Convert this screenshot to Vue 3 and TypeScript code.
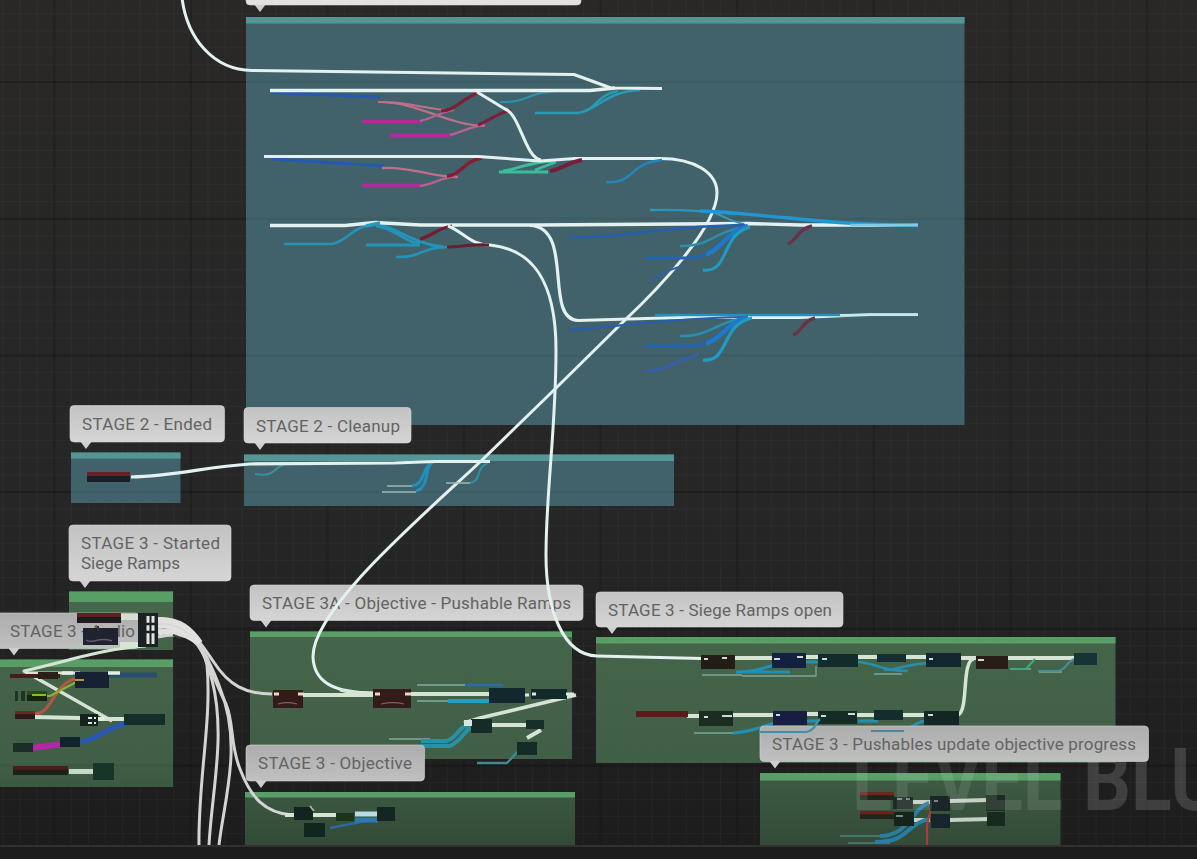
<script setup lang="ts">
interface Panel { x: number; y: number; w: number; h: number; head: number; tone: 'teal' | 'green' }
interface Label { x: number; y: number; w: number; h: number; lines: { t: string; len: number }[]; tail: number; shade: string }
interface Wire { d: string; c: string; w: number }
interface Block { x: number; y: number; w: number; h: number; c: string; top?: string }

const panels: Panel[] = [
  { x: 246, y: 17, w: 718.5, h: 408, head: 6.5, tone: 'teal' },
  { x: 71, y: 452.5, w: 109.5, h: 50.5, head: 6, tone: 'teal' },
  { x: 244, y: 454.5, w: 430, h: 51.5, head: 6.5, tone: 'teal' },
  { x: 69, y: 591.5, w: 104, h: 58.5, head: 10.5, tone: 'green' },
  { x: 0, y: 659.5, w: 173, h: 127.5, head: 7.5, tone: 'green' },
  { x: 250, y: 631.5, w: 322, h: 127.5, head: 5.5, tone: 'green' },
  { x: 245, y: 792, w: 330, h: 54, head: 5.5, tone: 'green' },
  { x: 596, y: 637, w: 519.5, h: 126, head: 6.5, tone: 'green' },
  { x: 760, y: 773, w: 300.5, h: 73, head: 7.5, tone: 'green' },
]

const backLabels: Label[] = [
  { x: 246, y: -40, w: 335, h: 45, lines: [], tail: 260, shade: 'top' },
  { x: 70, y: 405.5, w: 154.5, h: 36.5, lines: [{ t: 'STAGE 2 - Ended', len: 130 }], tail: 86, shade: 'light' },
  { x: 244, y: 407.5, w: 167, h: 35.5, lines: [{ t: 'STAGE 2 - Cleanup', len: 144 }], tail: 260, shade: 'light' },
  { x: 69, y: 525, w: 162, h: 56, lines: [{ t: 'STAGE 3 - Started', len: 139 }, { t: 'Siege Ramps', len: 99 }], tail: 85, shade: 'light' },
  { x: -6, y: 613, w: 145, h: 35.5, lines: [{ t: 'STAGE 3 - Audio', len: 125 }], tail: 14, shade: 'dim' },
  { x: 250, y: 585, w: 333, h: 35.5, lines: [{ t: 'STAGE 3A - Objective - Pushable Ramps', len: 309 }], tail: 266, shade: 'light' },
  { x: 596, y: 592, w: 247, h: 35, lines: [{ t: 'STAGE 3 - Siege Ramps open', len: 224 }], tail: 612, shade: 'light' },
]

const frontLabels: Label[] = [
  { x: 246, y: 745, w: 178.5, h: 36, lines: [{ t: 'STAGE 3 - Objective', len: 154 }], tail: 261, shade: 'dim' },
  { x: 760, y: 726, w: 388.5, h: 35.5, lines: [{ t: 'STAGE 3 - Pushables update objective progress', len: 364 }], tail: 775, shade: 'dim' },
]

const W = '#e4f1f1'
const G = '#d6e4d5'
const S = '#d4d4d3'
const wires: Wire[] = [
  // stage 2, data pins
  { d: 'M272 92.5 L380 97', c: '#2459ae', w: 3 },
  { d: 'M378 102 C420 102 445 125 485 126', c: '#bd7088', w: 2.2 },
  { d: 'M378 102 C410 101 430 111 454 110', c: '#bd7088', w: 2 },
  { d: 'M362 121.5 H422', c: '#b32b98', w: 3.5 },
  { d: 'M420 121 C434 118 440 112 454 110', c: '#b86090', w: 2.2 },
  { d: 'M390 135.5 H450', c: '#b32b98', w: 4 },
  { d: 'M450 135 C462 132 468 127 485 125', c: '#b86090', w: 2.4 },
  { d: 'M441 111 C455 111 464 97 480 92', c: '#7d1f36', w: 3.2 },
  { d: 'M478 125 C490 120 500 112 511 110', c: '#7d1f36', w: 3 },
  { d: 'M500 102 C530 103 525 92 560 91', c: '#2e93a9', w: 2 },
  { d: 'M535 113 H578 C600 109 604 92 640 90', c: '#279ab5', w: 2.6 },
  { d: 'M582 112 C595 110 598 94 618 91', c: '#279ab5', w: 2.3 },
  { d: 'M272 159 L384 166', c: '#2459ae', w: 3 },
  { d: 'M382 168 C410 166 435 178 458 177', c: '#bd7088', w: 2.3 },
  { d: 'M362 185.5 H420', c: '#b32b98', w: 4 },
  { d: 'M420 186 C434 184 440 178 456 176', c: '#b86090', w: 2.4 },
  { d: 'M447 176 C460 176 465 160 482 158', c: '#841c34', w: 3.4 },
  { d: 'M499 172 H548 M503 171 C520 169 525 162 556 161 M535 170 L556 162', c: '#3abd9b', w: 2.8 },
  // stage 2, execution
  { d: 'M182 -2 C187 38 213 70 252 70.5 L574 74.5 L611 88 L662 88.5', c: W, w: 3 },
  { d: 'M270 90.5 H590 L615 88', c: W, w: 3.3 },
  { d: 'M477 92 L505 109 C520 114 525 158 541 160', c: W, w: 3 },
  { d: 'M264 156.5 H478 L540 161 L575 158.5 H658 C695 158 717 173 717 193 C717 228 655 292 625 320 L553 391 L480 462 C420 518 312 610 313 657 C314 682 333 693 375 693', c: W, w: 3 },
  { d: 'M550 171 C560 170 566 163 582 160', c: '#741e3a', w: 4 },
  { d: 'M606 182 C635 184 628 163 662 160', c: '#2386bd', w: 2.4 },
  { d: 'M284 244 H332 C350 240 350 227 376 224', c: '#2593b8', w: 2.6 },
  { d: 'M370 224 C390 222 410 244 444 247 M376 226 C395 228 404 242 420 244 M366 245 H420', c: '#2593b8', w: 2.8 },
  { d: 'M396 257 C422 258 420 247 449 247', c: '#2593b8', w: 2.6 },
  { d: 'M270 225.5 H345 L375 222.5 L420 225 H540 L748 223.5 L800 225 H918', c: W, w: 3.4 },
  { d: 'M366 226 L380 223', c: '#239cb9', w: 3.5 },
  { d: 'M420 239 C430 237 438 228 452 226', c: '#731c32', w: 3.2 },
  { d: 'M448 226 C464 232 470 245 490 245 C532 249 556 280 556 350 C556 430 546 490 546 555 C546 610 563 655 597 656 L702 658.5', c: W, w: 3 },
  { d: 'M447 247 C460 247 470 244 489 245', c: '#65202d', w: 3 },
  { d: 'M530 225.5 C575 227 543 319 578 320.5 L680 317.5 H800 L870 314.5 H918', c: W, w: 3.2 },
  { d: 'M650 210 C690 209 715 212 735 214', c: '#2b95bf', w: 2.4 },
  { d: 'M700 211 C735 212 760 216 790 218 C830 222 860 225 918 225', c: '#2097d2', w: 3.4 },
  { d: 'M850 225 H918', c: '#7fcbe6', w: 2.4 },
  { d: 'M715 213 C725 217 732 222 744 224', c: '#3c9ab1', w: 2 },
  { d: 'M570 237 C620 239 660 226 745 225', c: '#285eae', w: 2.6 },
  { d: 'M680 246 C710 247 714 231 745 227', c: '#298fac', w: 2.4 },
  { d: 'M645 258 H692 C718 256 724 233 746 226', c: '#2464b2', w: 3 },
  { d: 'M706 255 C722 248 726 233 748 226', c: '#1e78cc', w: 4.5 },
  { d: 'M703 270 C730 273 720 235 750 227', c: '#219bc2', w: 3 },
  { d: 'M650 281 C665 273 671 268 684 266', c: '#345fa7', w: 2 },
  { d: 'M788 244 C798 239 798 229 812 226', c: '#6a3246', w: 3.4 },
  { d: 'M655 315 H840 L918 315', c: '#2490bb', w: 2.4 },
  { d: 'M570 330 C625 326 670 318 745 317', c: '#285eae', w: 2.2 },
  { d: 'M680 336 C710 337 715 322 745 318', c: '#298fac', w: 2.6 },
  { d: 'M645 346 H692 C718 344 724 324 748 317', c: '#2464b2', w: 3 },
  { d: 'M706 344 C722 338 726 324 748 317', c: '#1e78cc', w: 4.5 },
  { d: 'M703 360 C730 362 720 325 752 318', c: '#219bc2', w: 3.2 },
  { d: 'M645 371 C665 371 675 361 700 354', c: '#375fae', w: 2.6 },
  { d: 'M793 335 C803 331 802 321 815 318', c: '#6a3246', w: 3.4 },
  { d: 'M840 315 H918', c: '#c4e6ec', w: 2 },
  // stage 2 cleanup
  { d: 'M255 474 C278 478 272 465 290 463', c: '#37919b', w: 2 },
  { d: 'M387 486 H412 M382 492 H416 M446 483 H470', c: '#9bb9b7', w: 1.3 },
  { d: 'M412 486 C425 485 422 466 433 462 M416 491 C429 488 425 468 431 464', c: '#238fb9', w: 3 },
  { d: 'M470 483 C482 481 475 468 488 463', c: '#328da1', w: 2.2 },
  { d: 'M131 477 C175 476 205 467 250 464 L395 463 L435 461.5 H490', c: W, w: 3.2 },
  // stage 3 fan out
  { d: 'M158 619 C185 617 200 642 213 661 C229 686 246 694 272 694', c: S, w: 3 },
  { d: 'M158 622 C190 622 203 645 207 665 C212 720 198 780 199 845', c: S, w: 3 },
  { d: 'M158 626 C195 628 203 646 212 680 C226 735 212 790 209 845', c: S, w: 3 },
  { d: 'M158 630 C195 630 206 650 220 688 C243 745 224 800 219 845', c: S, w: 3 },
  { d: 'M158 624 C200 624 206 664 226 704 C234 722 230 745 240 769 C251 798 265 813 292 815', c: S, w: 3 },
  { d: 'M158 637 C190 630 201 643 208 660', c: S, w: 3 },
  { d: 'M158 620 C180 619 191 630 200 643', c: '#e0e0df', w: 6 },
  { d: 'M158 633 C176 629 184 634 197 642', c: '#e0e0df', w: 5 },
  { d: 'M158 627 C168 625 176 629 184 633', c: '#e0e0df', w: 4 },
  { d: 'M173 635 L181 638', c: '#3c3f3d', w: 2 },
  // audio
  { d: 'M120 617 H139 M120 645 L140 645', c: G, w: 6 },
  { d: 'M146 646 C105 648 65 662 24 671 L105 717 L112 721', c: G, w: 3.2 },
  { d: 'M28 673 H80', c: G, w: 3 },
  { d: 'M34 714 C54 714 51 683 80 677', c: '#b05742', w: 3.2 },
  { d: 'M30 696 H50 L82 679', c: '#86b536', w: 2 },
  { d: 'M34 717 L80 718 M96 719 H125', c: G, w: 4 },
  { d: 'M80 742 C100 739 107 726 132 722', c: '#2958b2', w: 5 },
  { d: 'M32 748 L62 744', c: '#b128a6', w: 6 },
  { d: 'M69 771.5 H95', c: '#c8d9ca', w: 5 },
  { d: 'M108 675 H157', c: '#294d6c', w: 5 },
  // pushable ramps
  { d: 'M303 695 H374 M411 694 H490', c: G, w: 4.2 },
  { d: 'M340 690 C350 693 360 693.5 374 693.5', c: G, w: 3 },
  { d: 'M417 685 H466 M417 701 H450 M389 739 H430 M390 746 H424', c: '#82ada0', w: 1.3 },
  { d: 'M465 685 H503', c: '#286baf', w: 2.6 },
  { d: 'M448 701 H490', c: '#249fc2', w: 4 },
  { d: 'M421 741 H446 C458 738 456 728 470 724 M421 746 H450 C460 742 464 732 471 727', c: '#2791a7', w: 4 },
  { d: 'M576 695 L480 718 L464 723', c: G, w: 3.6 },
  { d: 'M492 725 H527 M527 738 L541 730', c: G, w: 4 },
  { d: 'M477 763 H507 L520 749', c: '#3f8997', w: 2.4 },
  // objective
  { d: 'M285 815 H300 M312 815 H337', c: G, w: 4 },
  { d: 'M330 828 L376 819', c: '#286aa1', w: 2.4 },
  { d: 'M355 814 H378', c: '#b9dbe3', w: 5 },
  { d: 'M355 820 H378', c: '#2b79b0', w: 5 },
  // siege ramps
  { d: 'M735 658 H772 M805 657 H819 M857 657 H877 M903 657 H930 M960 658 H978 M1008 658 H1074', c: G, w: 4 },
  { d: 'M687 716 H700 M733 715 H774 M806 714 H820 M857 715 H877 M902 715 H928', c: G, w: 4 },
  { d: 'M958 715 C969 711 961 660 974 659', c: G, w: 3.5 },
  { d: 'M702 675 H742 M742 676 H816 V666 M874 674 H902 M694 733 H740 M1010 669 H1031 M1039 672 H1062', c: '#79a89b', w: 1.3 },
  { d: 'M736 672 C763 672 764 665 790 662 H819 M740 672 H790', c: '#258faf', w: 3 },
  { d: 'M855 662 C875 661 876 671 908 671 M884 670 C900 670 905 664 928 663', c: '#258faf', w: 2.6 },
  { d: 'M733 733 C763 731 764 722 790 721 H820', c: '#258faf', w: 3 },
  { d: 'M858 721 H878 M901 731 C910 731 914 721 930 720', c: '#258faf', w: 3 },
  { d: 'M1010 669 H1026 L1035 659', c: '#39a982', w: 2 },
  { d: 'M1038 671 H1058 C1067 670 1066 661 1075 659', c: '#478f99', w: 2 },
  // pushables update
  { d: 'M913 802 H930 M950 801 L988 800 M914 820 H930 M950 820 L990 819', c: '#c6d0c5', w: 4 },
  { d: 'M840 836 H884 M848 843 H890', c: '#507f79', w: 1.4 },
  { d: 'M875 842 C910 842 904 825 929 819 M880 836 C909 836 912 808 929 803', c: '#267ea4', w: 4 },
  { d: 'M927 846 V825 L932 804', c: '#a93e3b', w: 2.2 },
]

const blocks: Block[] = [
  { x: 87, y: 472, w: 43, h: 10, c: '#191e29', top: '#6b1e26' },
  { x: 77, y: 613, w: 44, h: 10, c: '#1b1c1f', top: '#5e211f' },
  { x: 83, y: 628, w: 35, h: 17, c: '#20222d' },
  { x: 138, y: 613, w: 20, h: 34, c: '#1d2023' },
  { x: 10, y: 674, w: 50, h: 4, c: '#4a1b19' },
  { x: 38, y: 672, w: 20, h: 7, c: '#2b1e18' },
  { x: 75, y: 672, w: 34, h: 16, c: '#162133' },
  { x: 15, y: 691, w: 3, h: 10, c: '#1f3320' }, { x: 21, y: 691, w: 4, h: 10, c: '#1f3320' },
  { x: 27, y: 691, w: 20, h: 10, c: '#17230f', top: '#2c4a14' },
  { x: 15, y: 711, w: 20, h: 8, c: '#281b18', top: '#742320' },
  { x: 80, y: 714, w: 18, h: 12, c: '#14231e' },
  { x: 124, y: 714, w: 41, h: 11, c: '#142f28' },
  { x: 13, y: 743, w: 20, h: 9, c: '#1a2d26' },
  { x: 60, y: 737, w: 20, h: 10, c: '#13232b' },
  { x: 13, y: 766, w: 55, h: 9, c: '#1d2118', top: '#472018' },
  { x: 93, y: 763, w: 21, h: 17, c: '#18352a' },
  { x: 273, y: 690, w: 30, h: 18, c: '#331b1a' },
  { x: 373, y: 689, w: 38, h: 19, c: '#331b1a' },
  { x: 489, y: 688, w: 36, h: 15, c: '#12282e' },
  { x: 531, y: 689, w: 36, h: 10, c: '#12282a' },
  { x: 471, y: 719, w: 21, h: 14, c: '#152b27' },
  { x: 526, y: 720, w: 18, h: 9, c: '#172f28' },
  { x: 517, y: 742, w: 20, h: 13, c: '#142b28' },
  { x: 294, y: 807, w: 19, h: 13, c: '#13241f' }, { x: 304, y: 823, w: 21, h: 14, c: '#11261f' },
  { x: 336, y: 813, w: 18, h: 8, c: '#1c351a' }, { x: 377, y: 807, w: 18, h: 14, c: '#13261f' },
  { x: 701, y: 655, w: 34, h: 14, c: '#241d17' }, { x: 772, y: 653, w: 34, h: 15, c: '#13203f' },
  { x: 818, y: 654, w: 40, h: 13, c: '#142b2c' }, { x: 877, y: 654, w: 29, h: 8, c: '#123032' },
  { x: 926, y: 653, w: 35, h: 14, c: '#132530' }, { x: 976, y: 656, w: 32, h: 13, c: '#291d18' },
  { x: 1074, y: 653, w: 23, h: 12, c: '#173337' },
  { x: 636, y: 711, w: 52, h: 6, c: '#541f1b' },
  { x: 699, y: 711, w: 34, h: 15, c: '#1b2c20' }, { x: 773, y: 711, w: 34, h: 14, c: '#171d43' },
  { x: 818, y: 711, w: 39, h: 13, c: '#142b27' }, { x: 874, y: 710, w: 29, h: 10, c: '#142c2c' },
  { x: 924, y: 711, w: 35, h: 14, c: '#142526' },
  { x: 860, y: 792, w: 34, h: 8, c: '#20261c', top: '#6f2520' },
  { x: 860, y: 811, w: 34, h: 8, c: '#20261c', top: '#771d1b' },
  { x: 893, y: 797, w: 20, h: 12, c: '#1c2924' }, { x: 894, y: 812, w: 20, h: 14, c: '#16231d' },
  { x: 930, y: 796, w: 20, h: 15, c: '#1a2527' }, { x: 931, y: 814, w: 19, h: 14, c: '#16242b' },
  { x: 986, y: 795, w: 19, h: 16, c: '#1b2b23' }, { x: 987, y: 812, w: 18, h: 14, c: '#172a20' },
]

// Small pin marks drawn on top of the node bodies.
const pins: Wire[] = [
  { d: 'M148 616 V644 M153 616 V644', c: '#e3e5e3', w: 3 },
  { d: 'M145 624 H157 M145 632 H157', c: '#1d2023', w: 2.5 },
  { d: 'M121 617 H138', c: '#d3dfd2', w: 6 },
  { d: 'M62 673 H73 M108 673 H120 M99 719 H104', c: '#e3eee3', w: 3.5 },
  { d: 'M88 718 H92 M88 723 H92 M94 718 H96 M94 723 H96', c: '#dfe8df', w: 2 },
  { d: 'M32 695 H46', c: '#86bd28', w: 2 },
  { d: 'M75 680 H84', c: '#bc9438', w: 2 },
  { d: 'M86 640 C93 645 97 636 112 641', c: '#66547a', w: 1.5 },
  { d: 'M98 626 V631', c: '#31323b', w: 2 },
  { d: 'M278 704 C284 702 290 702 297 704 M381 704 C390 702 396 702 404 704', c: '#7f6460', w: 1.2 },
  { d: 'M274 694 H279 M298 694 H304 M375 694 H380 M405 694 H412', c: '#e8d7d0', w: 3 },
  { d: 'M310 806 L314 811', c: '#9fb7a3', w: 2 },
  { d: 'M525 695 H529 M532 694 H536 M566 694 H574', c: '#d7e9e4', w: 3 },
  { d: 'M464 723 H472', c: '#d7e9e4', w: 6 },
  { d: 'M704 659 H708 M722 658 H727 M774 659 H780 M797 657 H803 M822 659 H827 M929 659 H933 M978 660 H984 M704 717 H708 M722 716 H732 M776 715 H780 M821 716 H826 M848 714 H855 M928 715 H933', c: '#cadbd2', w: 2 },
  { d: 'M897 799 H902 M906 799 H910 M896 816 H903 M934 801 H938', c: '#9aaba0', w: 1.6 },
]

// Wires that stay visible over the edge of the lower comment bubble.
const overWires: Wire[] = [
  { d: 'M760 732 H806 C815 731 816 722 820 719', c: '#3d93ae', w: 2.2 },
  { d: 'M871 731 H904', c: '#4f8596', w: 1.8 },
]

function grid(start: number, step: number, max: number): number[] {
  const out: number[] = []
  for (let v = start; v < max; v += step) out.push(v)
  return out
}
const minorX = grid(3, 17.08, 1197)
const minorY = grid(13.7, 17.08, 859)
const majorX = grid(54.3, 136.6, 1197)
const majorY = grid(82, 136.7, 859)
</script>

<template>
  <main class="graph">
    <svg class="canvas" width="1197" height="859" viewBox="0 0 1197 859">
      <defs>
        <linearGradient id="bg" x1="0" y1="0" x2="0" y2="1">
          <stop offset="0" stop-color="#292827" />
          <stop offset="0.6" stop-color="#262626" />
          <stop offset="1" stop-color="#1c1c1c" />
        </linearGradient>
        <linearGradient id="top" x1="0" y1="0" x2="0" y2="1">
          <stop offset="0" stop-color="#d4d3d0" />
          <stop offset="1" stop-color="#e4e3df" />
        </linearGradient>
        <linearGradient id="light" x1="0" y1="0" x2="0" y2="1">
          <stop offset="0" stop-color="#c3c3c3" />
          <stop offset="1" stop-color="#d5d5d5" />
        </linearGradient>
        <linearGradient id="dim" x1="0" y1="0" x2="0" y2="1">
          <stop offset="0" stop-color="#adadad" />
          <stop offset="1" stop-color="#c0c0c0" />
        </linearGradient>
        <linearGradient id="greenBody" gradientUnits="userSpaceOnUse" x1="0" y1="600" x2="0" y2="846">
          <stop offset="0" stop-color="#47694d" />
          <stop offset="0.65" stop-color="#426148" />
          <stop offset="1" stop-color="#334c38" />
        </linearGradient>
      </defs>

      <rect width="1197" height="859" fill="url(#bg)" />

      <g class="minor">
        <line v-for="x in minorX" :key="'mx' + x" :x1="x" y1="0" :x2="x" y2="846" />
        <line v-for="y in minorY" :key="'my' + y" x1="0" :y1="y" x2="1197" :y2="y" />
      </g>
      <g class="major">
        <line v-for="x in majorX" :key="'jx' + x" :x1="x" y1="0" :x2="x" y2="846" />
        <line v-for="y in majorY" :key="'jy' + y" x1="0" :y1="y" x2="1197" :y2="y" />
      </g>

      <g v-for="(p, i) in panels" :key="'p' + i">
        <rect :x="p.x" :y="p.y" :width="p.w" :height="p.h" :class="p.tone" />
        <rect :x="p.x" :y="p.y" :width="p.w" :height="p.head" :class="p.tone + '-head'" />
      </g>
      <g class="major faint">
        <line v-for="y in majorY" :key="'fy' + y" x1="0" :y1="y" x2="1197" :y2="y" />
      </g>

      <g v-for="(l, i) in backLabels" :key="'bl' + i">
        <path :d="`M${l.tail - 6} ${l.y + l.h - 1} h12 l-6 8 z`" class="tail" />
        <rect :x="l.x" :y="l.y" :width="l.w" :height="l.h" rx="4" :fill="`url(#${l.shade})`" class="bubble" />
        <text v-for="(s, k) in l.lines" :key="k" :x="l.tail - 4" :y="l.y + 24 + k * 20" :textLength="s.len">{{ s.t }}</text>
      </g>

      <g fill="none" stroke-linejoin="round">
        <path v-for="(w, i) in wires" :key="'w' + i" :d="w.d" :stroke="w.c" :stroke-width="w.w" />
      </g>
      <g v-for="(b, i) in blocks" :key="'b' + i">
        <rect :x="b.x" :y="b.y" :width="b.w" :height="b.h" :fill="b.c" />
        <rect v-if="b.top" :x="b.x" :y="b.y" :width="b.w" :height="b.h * 0.4" :fill="b.top" />
      </g>
      <g fill="none">
        <path v-for="(w, i) in pins" :key="'n' + i" :d="w.d" :stroke="w.c" :stroke-width="w.w" />
      </g>

      <g class="watermark">
        <text class="soft" x="852" y="810" textLength="211" lengthAdjust="spacingAndGlyphs">LEVEL</text>
        <text x="1083" y="810" textLength="137" lengthAdjust="spacingAndGlyphs">BLU</text>
      </g>

      <g v-for="(l, i) in frontLabels" :key="'fl' + i">
        <path :d="`M${l.tail - 6} ${l.y + l.h - 1} h12 l-6 8 z`" class="tail" />
        <rect :x="l.x" :y="l.y" :width="l.w" :height="l.h" rx="4" :fill="`url(#${l.shade})`" class="bubble" />
        <text v-for="(s, k) in l.lines" :key="k" :x="l.tail - 3" :y="l.y + 24 + k * 20" :textLength="s.len">{{ s.t }}</text>
      </g>
      <g fill="none">
        <path v-for="(w, i) in overWires" :key="'o' + i" :d="w.d" :stroke="w.c" :stroke-width="w.w" />
      </g>

      <rect y="846" width="1197" height="13" fill="#1c1c1c" />
      <rect y="845" width="1197" height="2" fill="#303130" />
    </svg>
  </main>
</template>

<style>
body {
  margin: 0;
  background: #242424;
  overflow: hidden;
}
</style>

<style scoped>
.graph {
  width: 1197px;
  height: 859px;
  overflow: hidden;
}
.canvas {
  display: block;
}
.teal { fill: #42646c; fill-opacity: 0.97; }
.teal-head { fill: #559596; }
.green { fill: url(#greenBody); fill-opacity: 0.97; }
.green-head { fill: #5a9e67; }
.minor line { stroke: #fff; stroke-opacity: 0.026; stroke-width: 1.3; }
.major line { stroke: #000; stroke-opacity: 0.2; stroke-width: 2; }
.faint line { stroke-opacity: 0.05; }
.bubble { stroke: #d6d6d6; stroke-opacity: 0.6; stroke-width: 1; }
.tail { fill: #cfcfcf; }
text {
  font-family: Roboto, "Liberation Sans", sans-serif;
  font-size: 17px;
  fill: #636363;
}
.watermark text {
  font-size: 87px;
  font-weight: 700;
  fill: #fff;
  fill-opacity: 0.15;
}
.watermark .soft {
  fill-opacity: 0.1;
}
</style>
